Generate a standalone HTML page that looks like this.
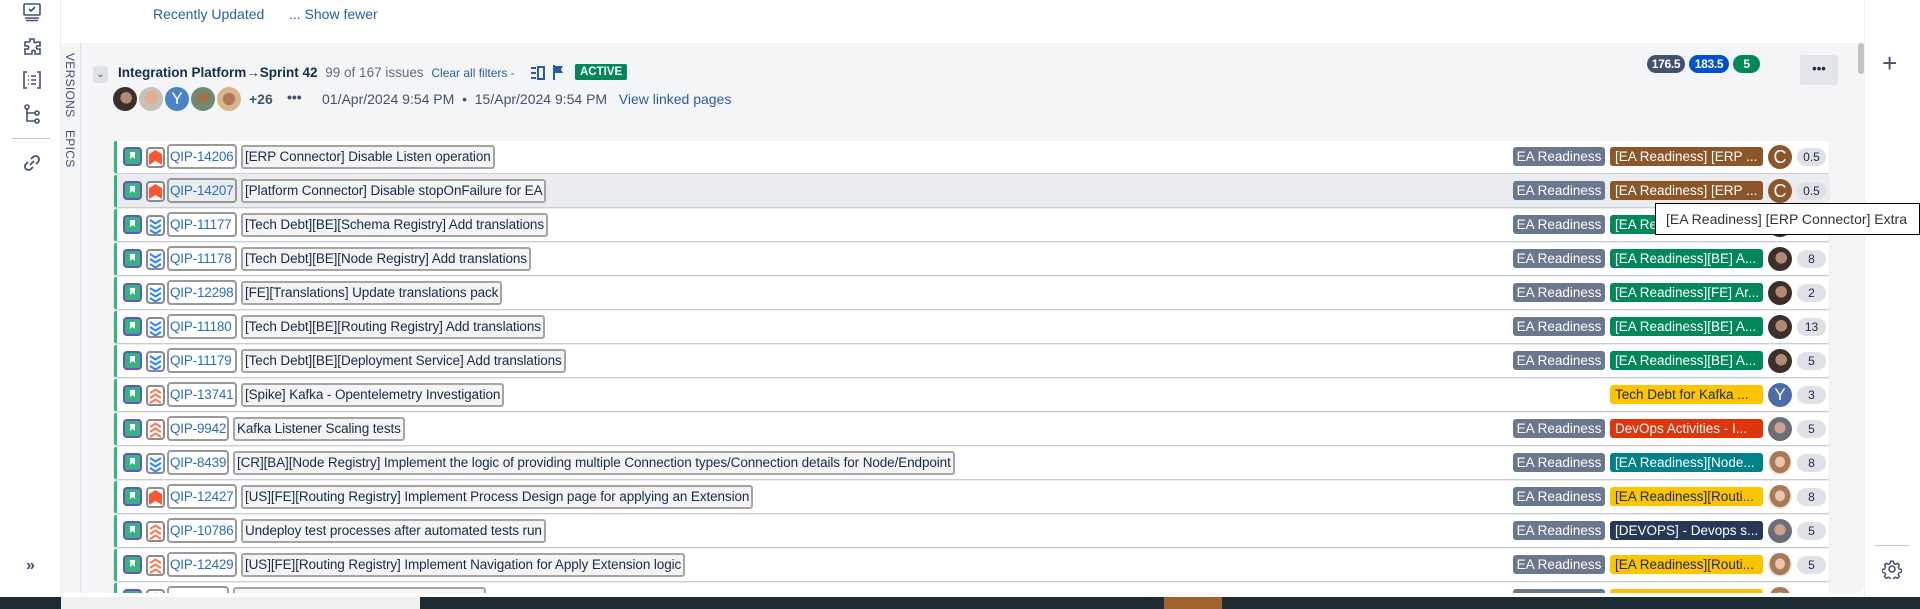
<!DOCTYPE html>
<html><head><meta charset="utf-8">
<style>
*{box-sizing:border-box;margin:0;padding:0}
body{width:1920px;height:609px;overflow:hidden;background:#fff;font-family:"Liberation Sans",sans-serif;position:relative;color:#172b4d}
.abs{position:absolute}
.lsb{left:0;top:0;width:61px;height:597px;background:#fff;border-right:1px solid #ebecf0}
.lsb svg{position:absolute;left:22px}
.panel{left:61px;top:43px;width:1803px;height:550px;background:#f4f5f7;border-radius:0 0 8px 8px;overflow:hidden}
.tabs{left:61px;top:43px;width:20px;height:550px;border-right:1px solid #dfe1e6;background:#f4f5f7}
.vt{position:absolute;writing-mode:vertical-rl;font-size:12px;color:#42526e;letter-spacing:.3px}
.row{position:absolute;left:114px;width:1715px;height:32px;background:#fff;border-left:3px solid #36b37e;box-shadow:0 1px 1px #c1c7d0;border-radius:2px}
.row.h{background:#ebecf0}
.ti{position:absolute;left:6px;top:6px;width:19px;height:19px;border:2px solid #6554c0;border-radius:4px;background:#36b37e}
.ti:after{content:"";position:absolute;left:5px;top:3px;width:5px;height:7px;background:#fff;clip-path:polygon(0 0,100% 0,100% 100%,50% 70%,0 100%)}
.pi{position:absolute;left:29px;top:6px;width:19px;height:21px;border:2px solid #8a8a8a;border-radius:4px;background:#fff}
.key{position:absolute;left:50px;top:3px;height:25px;padding:0 1px;border:2px solid #999;border-radius:4px;font-size:13.5px;line-height:21px;color:#2a6ebb;white-space:nowrap;letter-spacing:-.2px}
.sum{position:absolute;top:4px;height:24px;padding:0 2px;border:2px solid #a5a5a5;border-radius:3px;background:#f4f4f4;font-size:13.5px;line-height:20px;color:#172b4d;white-space:nowrap;letter-spacing:-.1px}
.ea{position:absolute;left:1396px;top:6px;width:92px;height:19px;background:#6b778c;color:#fff;font-size:13.5px;line-height:19px;text-align:center;border-radius:3px}
.ep{position:absolute;left:1493px;top:6px;width:153px;height:19px;color:#fff;font-size:13.5px;line-height:19px;padding-left:5px;border-radius:3px;white-space:nowrap;overflow:hidden}
.av{position:absolute;left:1651px;top:4px;width:24px;height:24px;border-radius:50%;overflow:hidden}
.est{position:absolute;left:1680px;top:7px;width:29px;height:18px;border-radius:9px;background:#dfe1e6;font-size:12px;line-height:18px;text-align:center;color:#172b4d}
.face{background:radial-gradient(circle at 55% 45%,#b08a74 0 30%,#3a2f2a 32% 100%)}
.fw{background:radial-gradient(ellipse at 50% 45%,#e9c4b0 0 28%,#a67b56 30% 60%,#f1e4dc 62%)}
.fb{background:radial-gradient(circle at 50% 45%,#d0a08a 0 30%,#6b6e78 33% 100%)}
.pill{position:absolute;top:55px;height:18px;border-radius:9px;color:#fff;font-size:12px;line-height:18px;font-weight:bold;text-align:center;letter-spacing:-.3px}
</style></head><body>

<div class="abs lsb">
<svg style="top:2px" width="20" height="20" viewBox="0 0 20 20" fill="none" stroke="#42526e" stroke-width="1.6"><rect x="2" y="2" width="16" height="11" rx="1"/><path d="M7 7l2 2 4-4M3 16h14M4 18.5h12"/></svg>
<svg style="top:37px" width="20" height="20" viewBox="0 0 20 20" fill="none" stroke="#42526e" stroke-width="1.6"><path d="M8 2h4v3a2 2 0 0 0 3 0h3v4h-3a2 2 0 0 0 0 3h3v5H13v-3a2 2 0 0 0-3 0v3H3v-5h3a2 2 0 0 0 0-3H3V5h3a2 2 0 0 0 2-3z"/></svg>
<svg style="top:70px" width="20" height="20" viewBox="0 0 20 20" fill="none" stroke="#42526e" stroke-width="1.6"><path d="M5 2H2v16h3M15 2h3v16h-3M6 6h1M9 6h5M6 10h1M9 10h5M6 14h1M9 14h5"/></svg>
<svg style="top:104px" width="20" height="20" viewBox="0 0 20 20" fill="none" stroke="#42526e" stroke-width="1.6"><circle cx="5" cy="3" r="2"/><path d="M5 5v12h8M5 9h8"/><circle cx="15" cy="9" r="2"/><circle cx="15" cy="17" r="2"/></svg>
<div class="abs" style="left:12px;top:138px;width:38px;height:1px;background:#c1c7d0"></div>
<svg style="top:153px" width="20" height="20" viewBox="0 0 20 20" fill="none" stroke="#42526e" stroke-width="1.8"><path d="M8 12l4-4M9 6l2-2a3 3 0 0 1 5 5l-2 2M11 14l-2 2a3 3 0 0 1-5-5l2-2"/></svg>
<div class="abs" style="left:26px;top:557px;font-size:16px;color:#42526e;font-weight:bold">»</div>
</div>

<div class="abs" style="left:153px;top:6px;font-size:14px;color:#2a5d9f">Recently Updated</div>
<div class="abs" style="left:289px;top:6px;font-size:14px;color:#2a5d9f">... Show fewer</div>

<div class="abs panel"></div>
<div class="abs tabs"><div class="vt" style="left:2px;top:10px">VERSIONS</div><div class="vt" style="left:2px;top:87px">EPICS</div></div>

<div class="abs" style="left:93px;top:66px;width:15px;height:17px;background:#dfe1e6;border-radius:3px;font-size:10px;text-align:center;line-height:17px;color:#42526e">&#8964;</div>
<div class="abs" style="left:118px;top:65px;font-size:13.5px;font-weight:bold;color:#172b4d;white-space:nowrap">Integration Platform→Sprint 42 <span style="font-weight:normal;color:#5e6c84;margin-left:4px">99 of 167 issues</span> <span style="font-weight:normal;color:#2a5d9f;font-size:12px;margin-left:4px">Clear all filters -</span></div>
<svg class="abs" style="left:531px;top:66px" width="14" height="14" viewBox="0 0 14 14" fill="#2a5d9f"><rect x="0" y="1" width="5" height="2"/><rect x="0" y="6" width="5" height="2"/><rect x="0" y="11" width="5" height="2"/><rect x="7" y="1" width="6" height="12" fill="none" stroke="#2a5d9f" stroke-width="2"/></svg>
<svg class="abs" style="left:552px;top:65px" width="12" height="15" viewBox="0 0 12 15" fill="#2a5d9f"><path d="M1 0h2v15H1zM3 1h8l-2 3.5L11 8H3z"/></svg>
<div class="abs" style="left:575px;top:64px;height:16px;padding:0 5px;background:#00875a;color:#fff;font-size:11.5px;font-weight:bold;line-height:16px;border-radius:2px">ACTIVE</div>

<div class="abs face" style="left:113px;top:87px;width:24px;height:24px;border-radius:50%"></div>
<div class="abs fb" style="left:139px;top:87px;width:24px;height:24px;border-radius:50%;background:radial-gradient(circle at 50% 45%,#e0b090 0 35%,#c9c0b8 38%)"></div>
<div class="abs" style="left:165px;top:87px;width:24px;height:24px;border-radius:50%;background:#4a83c6;color:#fff;font-size:17px;text-align:center;line-height:24px">Y</div>
<div class="abs" style="left:191px;top:87px;width:24px;height:24px;border-radius:50%;background:radial-gradient(circle at 50% 45%,#a0704f 0 30%,#6f8a70 33%)"></div>
<div class="abs" style="left:217px;top:87px;width:24px;height:24px;border-radius:50%;background:radial-gradient(circle at 50% 50%,#b07a5a 0 35%,#d9b58a 38%)"></div>
<div class="abs" style="left:249px;top:91px;font-size:14px;font-weight:bold;color:#42526e">+26</div>
<div class="abs" style="left:287px;top:89px;font-size:14px;font-weight:bold;color:#42526e">•••</div>
<div class="abs" style="left:322px;top:91px;font-size:14px;color:#42526e;white-space:nowrap">01/Apr/2024 9:54 PM &nbsp;• &nbsp;15/Apr/2024 9:54 PM &nbsp;&nbsp;<span style="color:#2a5d9f">View linked pages</span></div>

<div class="pill" style="left:1647px;width:38px;background:#42526e">176.5</div>
<div class="pill" style="left:1689px;width:40px;background:#0052cc">183.5</div>
<div class="pill" style="left:1733px;width:27px;background:#00875a">5</div>
<div class="abs" style="left:1800px;top:55px;width:38px;height:30px;background:#e4e5e9;border-radius:3px;text-align:center;font-weight:bold;font-size:13px;line-height:28px;color:#172b4d">•••</div>
<div class="abs" style="left:1858px;top:43px;width:6px;height:31px;background:#c1c1c1;border-radius:3px"></div>

<div class="abs" style="left:1864px;top:0;width:56px;height:597px;background:#fff;border-left:1px solid #ebecf0"></div>
<div class="abs" style="left:1882px;top:48px;font-size:26px;color:#42526e;font-weight:300">+</div>
<div class="abs" style="left:1874px;top:545px;width:36px;height:1px;background:#c1c7d0"></div>
<svg class="abs" style="left:1882px;top:559px" width="20" height="20" viewBox="0 0 20 20" fill="none" stroke="#42526e" stroke-width="1.6"><circle cx="10" cy="10" r="3"/><path d="M8.5 1.5h3l.5 2.5 2 1 2.3-1.2 2 2-1.2 2.3 1 2 2.5.5v3l-2.5.5-1 2 1.2 2.3-2 2-2.3-1.2-2 1-.5 2.5h-3l-.5-2.5-2-1-2.3 1.2-2-2 1.2-2.3-1-2-2.5-.5v-3l2.5-.5 1-2-1.2-2.3 2-2 2.3 1.2 2-1z" transform="scale(.9) translate(1 1)"/></svg>

<div id="rows"></div>

<div class="abs" style="left:0;top:597px;width:1920px;height:12px;background:#1f2c33"></div>
<div class="abs" style="left:61px;top:597px;width:359px;height:12px;background:#f0f0f0"></div>
<div class="abs" style="left:1164px;top:597px;width:58px;height:12px;background:#a0632f"></div>

<div class="abs" style="left:1655px;top:203px;width:265px;height:32px;background:#fff;border:1px solid #000;font-size:14px;line-height:30px;padding-left:10px;color:#333;white-space:nowrap">[EA Readiness] [ERP Connector] Extra</div>

<script>
var P={hi:'<svg width="15" height="17" viewBox="0 0 15 17"><path d="M1 5l6.5-4 6.5 4v11l-6.5-4-6.5 4z" fill="#ff5630"/></svg>',
lo:'<svg width="15" height="17" viewBox="0 0 15 17" fill="none" stroke="#2684ff" stroke-width="2"><path d="M2 3l5.5 3.5L13 3M2 8l5.5 3.5L13 8M2 13l5.5 3.5L13 13"/></svg>',
up:'<svg width="15" height="17" viewBox="0 0 15 17" fill="none" stroke="#ff7452" stroke-width="2"><path d="M2 6l5.5-3.5L13 6M2 11l5.5-3.5L13 11M2 16l5.5-3.5L13 16"/></svg>'};
var C={br:'#8b572a',g:'#00875a',y:'#ffc400',r:'#de350b',t:'#00818a',n:'#253858'};
var R=[
['hi','QIP-14206','[ERP Connector] Disable Listen operation',1,'br','[EA Readiness] [ERP ...','C','0.5'],
['hi','QIP-14207','[Platform Connector] Disable stopOnFailure for EA',1,'br','[EA Readiness] [ERP ...','C','0.5'],
['lo','QIP-11177','[Tech Debt][BE][Schema Registry] Add translations',1,'g','[EA Readiness][BE] A...','face','8'],
['lo','QIP-11178','[Tech Debt][BE][Node Registry] Add translations',1,'g','[EA Readiness][BE] A...','face','8'],
['lo','QIP-12298','[FE][Translations] Update translations pack',1,'g','[EA Readiness][FE] Ar...','face','2'],
['lo','QIP-11180','[Tech Debt][BE][Routing Registry] Add translations',1,'g','[EA Readiness][BE] A...','face','13'],
['lo','QIP-11179','[Tech Debt][BE][Deployment Service] Add translations',1,'g','[EA Readiness][BE] A...','face','5'],
['up','QIP-13741','[Spike] Kafka - Opentelemetry Investigation',0,'y','Tech Debt for Kafka ...','Y','3'],
['up','QIP-9942','Kafka Listener Scaling tests',1,'r','DevOps Activities - I...','fb','5'],
['lo','QIP-8439','[CR][BA][Node Registry] Implement the logic of providing multiple Connection types/Connection details for Node/Endpoint',1,'t','[EA Readiness][Node...','fw','8'],
['hi','QIP-12427','[US][FE][Routing Registry] Implement Process Design page for applying an Extension',1,'y','[EA Readiness][Routi...','fw','8'],
['up','QIP-10786','Undeploy test processes after automated tests run',1,'n','[DEVOPS] - Devops s...','fb','5'],
['up','QIP-12429','[US][FE][Routing Registry] Implement Navigation for Apply Extension logic',1,'y','[EA Readiness][Routi...','fw','5'],
['up','','                                                                   ',1,'y','','fw','']];
var h='';
R.forEach(function(r,i){
 var top=141+i*34;
 var kw=r[1].length<9?62:70;
 var av=r[6]=='C'?'<div class="av" style="background:#8b572a;color:#fff;font-size:18px;text-align:center;line-height:24px">C</div>':
  r[6]=='Y'?'<div class="av" style="background:#4c6ca8;color:#fff;font-size:17px;text-align:center;line-height:24px">Y</div>':
  '<div class="av '+r[6]+'"></div>';
 h+='<div class="row'+(i==1?' h':'')+'" style="top:'+top+'px">'+
 '<div class="ti"></div><div class="pi">'+P[r[0]]+'</div>'+
 '<div class="key" style="width:'+kw+'px">'+r[1]+'</div>'+
 '<div class="sum" style="left:'+(50+kw+4)+'px">'+r[2].replace(/ {2,}/g,function(s){return s.replace(/ /g,'&nbsp;')})+'</div>'+
 (r[3]?'<div class="ea">EA Readiness</div>':'')+
 '<div class="ep" style="background:'+C[r[4]]+';color:'+(r[4]=='y'?'#172b4d':'#fff')+'">'+r[5]+'</div>'+
 av+(r[7]?'<div class="est">'+r[7]+'</div>':'')+'</div>';
});
document.getElementById('rows').innerHTML='<div class="abs" style="left:0;top:0;width:1864px;height:593px;overflow:hidden">'+h+'</div>';
</script>
</body></html>
